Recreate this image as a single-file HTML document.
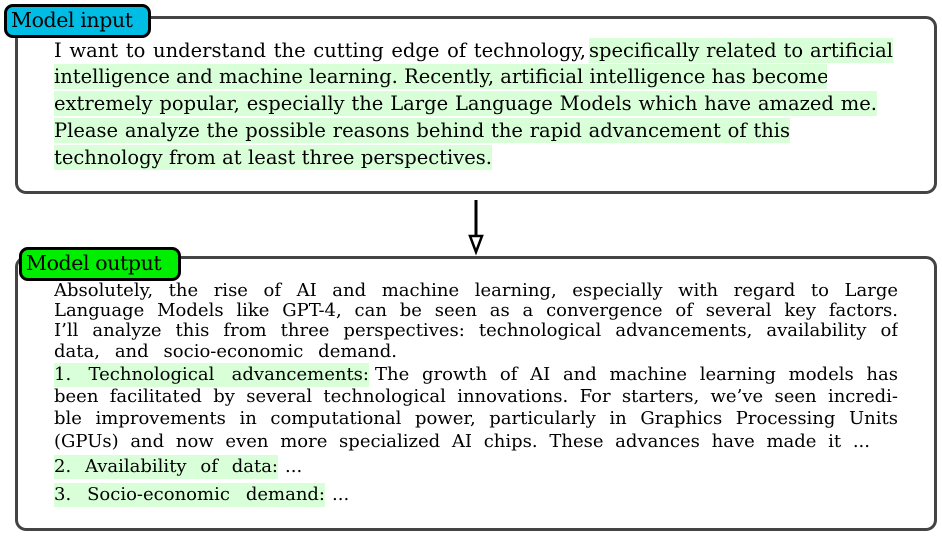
<!DOCTYPE html>
<html><head><meta charset="utf-8"><style>
body{margin:0;width:942px;height:536px;background:#fff;position:relative;overflow:hidden;font-family:"DejaVu Serif","Liberation Serif",serif;color:#000}
.box{position:absolute;border:3px solid #444;border-radius:11px;box-sizing:border-box}
.lab{position:absolute;border:3px solid #000;border-radius:9px;box-sizing:border-box;font-size:20.5px;line-height:27px;padding-left:4px;white-space:nowrap;letter-spacing:-0.4px}
.l{position:absolute;font-size:18px;line-height:24px;white-space:nowrap;overflow:hidden;text-align:justify;text-align-last:justify}
.i{font-size:19.5px;line-height:25px}
.h{background:#d9ffd9}
</style></head><body>
<div class="box" style="left:15px;top:16px;width:922px;height:178px"></div>
<div class="lab" style="left:4px;top:4px;width:147px;height:34px;background:#00bde6">Model input</div>
<div class="l i" style="top:38px;left:54px;width:532px">I want to understand the cutting edge of technology,</div>
<div class="l i h" style="top:38px;left:589px;width:304px">specifically related to artificial</div>
<div class="l i h" style="top:64px;left:54px;width:773px">intelligence and machine learning. Recently, artificial intelligence has become</div>
<div class="l i h" style="top:91px;left:54px;width:823px">extremely popular, especially the Large Language Models which have amazed me.</div>
<div class="l i h" style="top:118px;left:54px;width:736px">Please analyze the possible reasons behind the rapid advancement of this</div>
<div class="l i h" style="top:145px;left:54px;width:438px">technology from at least three perspectives.</div>

<svg style="position:absolute;left:466px;top:198px" width="20" height="58"><line x1="10" y1="2" x2="10" y2="42" stroke="#000" stroke-width="3"/><path d="M4 38 L10 54 L16 38 Z" fill="#fff" stroke="#000" stroke-width="2.5"/></svg>

<div class="box" style="left:15px;top:256px;width:922px;height:275px"></div>
<div class="lab" style="left:19px;top:247px;width:162px;height:34px;background:#00ee00">Model output</div>
<div class="l" style="top:279px;left:54px;width:844px">Absolutely, the rise of AI and machine learning, especially with regard to Large</div>
<div class="l" style="top:299px;left:54px;width:844px">Language Models like GPT-4, can be seen as a convergence of several key factors.</div>
<div class="l" style="top:319px;left:54px;width:844px">I’ll analyze this from three perspectives: technological advancements, availability of</div>
<div class="l" style="top:340px;left:54px;width:343px">data, and socio-economic demand.</div>
<div class="l h" style="top:363px;left:54px;width:315px">1. Technological advancements:</div>
<div class="l" style="top:363px;left:375px;width:523px">The growth of AI and machine learning models has</div>
<div class="l" style="top:385px;left:54px;width:844px">been facilitated by several technological innovations. For starters, we’ve seen incredi-</div>
<div class="l" style="top:407px;left:54px;width:844px">ble improvements in computational power, particularly in Graphics Processing Units</div>
<div class="l" style="top:430px;left:54px;width:816px">(GPUs) and now even more specialized AI chips. These advances have made it ...</div>
<div class="l h" style="top:455px;left:54px;width:224px">2. Availability of data:</div>
<div class="l" style="top:455px;left:285px;width:20px">...</div>
<div class="l h" style="top:483px;left:54px;width:271px">3. Socio-economic demand:</div>
<div class="l" style="top:483px;left:332px;width:20px">...</div>
</body></html>
